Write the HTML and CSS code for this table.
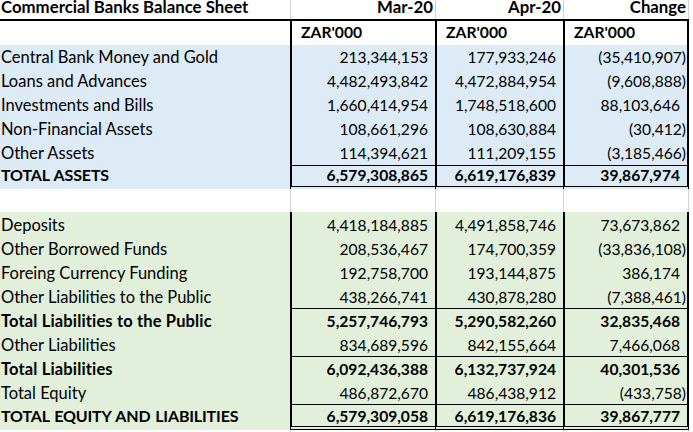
FILE: index.html
```html
<!DOCTYPE html>
<html>
<head>
<meta charset="utf-8">
<title>Commercial Banks Balance Sheet</title>
<link rel="stylesheet" href="styles.css">
</head>
<body>
<div class="sheet">
  <div class="row title">
    <div class="c lab">Commercial Banks Balance Sheet</div>
    <div class="c gv rt">Mar-20</div>
    <div class="c gv rt">Apr-20</div>
    <div class="c gv gr rt">Change</div>
  </div>
  <div class="row head">
    <div class="c lab"></div>
    <div class="c bv hl">ZAR'000</div>
    <div class="c bv hl">ZAR'000</div>
    <div class="c bv br hl">ZAR'000</div>
  </div>

  <div class="row blue">
    <div class="c lab">Central Bank Money and Gold</div>
    <div class="c bv num">213,344,153</div>
    <div class="c bv num">177,933,246</div>
    <div class="c bv br num neg">(35,410,907)</div>
  </div>
  <div class="row blue">
    <div class="c lab">Loans and Advances</div>
    <div class="c bv num">4,482,493,842</div>
    <div class="c bv num">4,472,884,954</div>
    <div class="c bv br num neg">(9,608,888)</div>
  </div>
  <div class="row blue">
    <div class="c lab">Investments and Bills</div>
    <div class="c bv num">1,660,414,954</div>
    <div class="c bv num">1,748,518,600</div>
    <div class="c bv br num">88,103,646</div>
  </div>
  <div class="row blue">
    <div class="c lab">Non-Financial Assets</div>
    <div class="c bv num">108,661,296</div>
    <div class="c bv num">108,630,884</div>
    <div class="c bv br num neg">(30,412)</div>
  </div>
  <div class="row blue">
    <div class="c lab">Other Assets</div>
    <div class="c bv num">114,394,621</div>
    <div class="c bv num">111,209,155</div>
    <div class="c bv br num neg">(3,185,466)</div>
  </div>
  <div class="row blue total grand ta">
    <div class="c lab caps">TOTAL ASSETS</div>
    <div class="c bv num">6,579,308,865</div>
    <div class="c bv num">6,619,176,839</div>
    <div class="c bv br num">39,867,974</div>
  </div>

  <div class="row spacer">
    <div class="c lab"></div>
    <div class="c gv"></div>
    <div class="c gv"></div>
    <div class="c gv gr"></div>
  </div>

  <div class="row green">
    <div class="c lab">Deposits</div>
    <div class="c bv num">4,418,184,885</div>
    <div class="c bv num">4,491,858,746</div>
    <div class="c bv br num">73,673,862</div>
  </div>
  <div class="row green">
    <div class="c lab">Other Borrowed Funds</div>
    <div class="c bv num">208,536,467</div>
    <div class="c bv num">174,700,359</div>
    <div class="c bv br num neg">(33,836,108)</div>
  </div>
  <div class="row green">
    <div class="c lab">Foreing Currency Funding</div>
    <div class="c bv num">192,758,700</div>
    <div class="c bv num">193,144,875</div>
    <div class="c bv br num">386,174</div>
  </div>
  <div class="row green">
    <div class="c lab">Other Liabilities to the Public</div>
    <div class="c bv num">438,266,741</div>
    <div class="c bv num">430,878,280</div>
    <div class="c bv br num neg">(7,388,461)</div>
  </div>
  <div class="row green total">
    <div class="c lab">Total Liabilities to the Public</div>
    <div class="c bv num">5,257,746,793</div>
    <div class="c bv num">5,290,582,260</div>
    <div class="c bv br num">32,835,468</div>
  </div>
  <div class="row green">
    <div class="c lab">Other Liabilities</div>
    <div class="c bv num">834,689,596</div>
    <div class="c bv num">842,155,664</div>
    <div class="c bv br num">7,466,068</div>
  </div>
  <div class="row green total">
    <div class="c lab">Total Liabilities</div>
    <div class="c bv num">6,092,436,388</div>
    <div class="c bv num">6,132,737,924</div>
    <div class="c bv br num">40,301,536</div>
  </div>
  <div class="row green">
    <div class="c lab">Total Equity</div>
    <div class="c bv num">486,872,670</div>
    <div class="c bv num">486,438,912</div>
    <div class="c bv br num neg">(433,758)</div>
  </div>
  <div class="row green total grand te">
    <div class="c lab caps">TOTAL EQUITY AND LIABILITIES</div>
    <div class="c bv num">6,579,309,058</div>
    <div class="c bv num">6,619,176,836</div>
    <div class="c bv br num">39,867,777</div>
  </div>
  <div class="row tail">
    <div class="c lab"></div>
    <div class="c gv"></div>
    <div class="c gv"></div>
    <div class="c gv gr"></div>
  </div>
</div>
</body>
</html>
```

FILE: styles.css
```css
* { box-sizing: border-box; }
html, body {
  margin: 0;
  padding: 0;
  background: #ffffff;
}
body {
  width: 693px;
  height: 432px;
  overflow: hidden;
  font-family: Lato, "Liberation Sans", sans-serif;
  font-size: 16.5px;
  color: #000;
}
.sheet {
  display: flex;
  flex-direction: column;
  width: 689px;
}
.row {
  display: grid;
  grid-template-columns: 290px 145px 128px 126px;
  height: 24px;
}
.c {
  display: flex;
  align-items: flex-end;
  line-height: 18px;
  white-space: nowrap;
  padding-bottom: 3px;
}
.lab { padding-left: 1px; }
.rt { justify-content: flex-end; padding-right: 2px; }
.num {
  justify-content: flex-end;
  padding-right: 7px;
  font-size: 15.6px;
}
.num.neg { padding-right: 1px; }
.hl { padding-left: 9px; }

/* borders */
.gv { border-left: 1px solid #d4d4d4; }
.gr { border-right: 1px solid #d4d4d4; }
.bv { border-left: 2px solid #000; }
.br { border-right: 2px solid #000; }

.title {
  height: 21px;
  font-weight: bold;
  font-size: 16.8px;
  border-bottom: 2px solid #000;
}
.title .c {
  line-height: 14px;
  padding-bottom: 5px;
}
.head {
  font-weight: bold;
  font-size: 15.7px;
}
.head .c { padding-bottom: 4px; }

.blue { background: #ddebf7; }
.green { background: #e2efda; }
.green .c { padding-bottom: 2px; }
.spacer { height: 23px; background: #fff; }
.tail { height: 2px; background: #fff; }

.total { font-weight: bold; }
.total .lab { letter-spacing: 0.15px; }
.total .lab.caps {
  font-size: 16px;
  letter-spacing: -0.15px;
  word-spacing: 1px;
}
.total .c { border-top: 1px solid #000; }
.total .lab { border-top-color: transparent; }
.grand .c { border-bottom: 4px double #000; }
.grand .lab { border-bottom-color: transparent; }
.ta { height: 24px; }
.ta .c { padding-bottom: 2px; }
.te { height: 26px; }
.te .c { padding-bottom: 1px; }
```
